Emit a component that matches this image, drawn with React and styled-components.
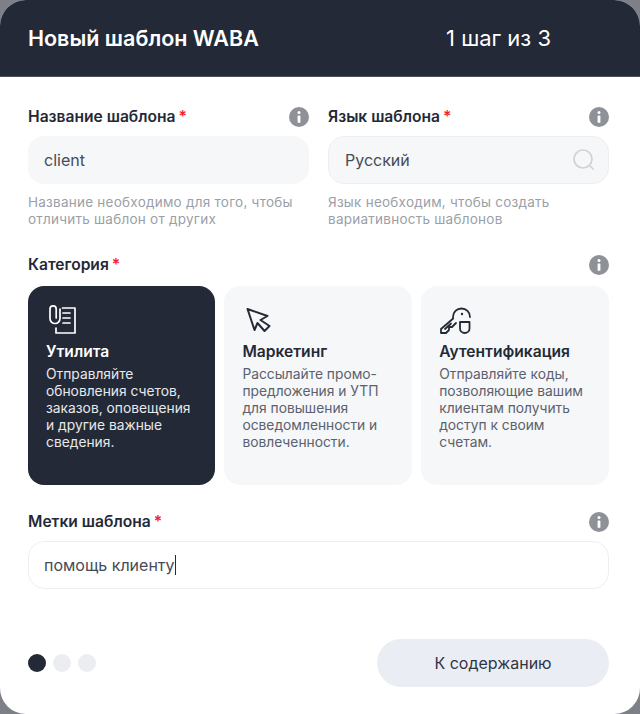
import React from "react";
import styled, { createGlobalStyle } from "styled-components";

const Global = createGlobalStyle`
  html, body { margin: 0; padding: 0; background: #7d8087; }
  * { box-sizing: border-box; }
  body { font-family: Inter, "Noto Sans", sans-serif; }
`;

const Modal = styled.div`
  width: 640px;
  height: 714px;
  background: #fff;
  border-radius: 26px;
  overflow: hidden;
  display: flex;
  flex-direction: column;
`;

const Header = styled.header`
  height: 77px;
  flex: none;
  background: #232936;
  color: #fff;
  display: grid;
  grid-template-columns: 418px 1fr;
  align-items: center;
  padding: 0 28px;
  border-bottom: 1px solid #4a4f5a;
`;

const Title = styled.h1`
  margin: 0;
  font-size: 21.5px;
  line-height: 24px;
  font-weight: 600;
`;

const Step = styled.div`
  font-size: 22px;
  line-height: 24px;
  font-weight: 400;
`;

const Body = styled.main`
  flex: 1;
  display: flex;
  flex-direction: column;
  padding: 29px 31px 27px 28px;
`;

const TwoCols = styled.div`
  display: grid;
  grid-template-columns: 281px 281px;
  column-gap: 19px;
`;

const LabelRow = styled.div`
  display: flex;
  align-items: center;
  justify-content: space-between;
  height: 22px;
`;

const Label = styled.label`
  font-size: 15.6px;
  line-height: 22px;
  font-weight: 600;
  color: #232936;
  i {
    font-style: normal;
    color: #f5222d;
    margin-left: 3px;
  }
`;

const InfoDot = styled.span`
  width: 20px;
  height: 20px;
  border-radius: 50%;
  background: #8e9197;
  display: flex;
  align-items: center;
  justify-content: center;
`;

const Field = styled.div`
  margin-top: 8px;
  height: 48px;
  border-radius: 16px;
  display: flex;
  align-items: center;
  justify-content: space-between;
  padding: 0 14px 0 ${(p) => p.$inset}px;
  font-size: 16px;
  color: #454b57;
  background: ${(p) => (p.$filled ? "#f6f7f9" : "#fff")};
  border: 1px solid ${(p) => (p.$bordered ? "#eceef1" : "transparent")};
`;

const Value = styled.span`
  display: inline-flex;
  align-items: center;
`;

const Caret = styled.span`
  display: inline-block;
  width: 1px;
  height: 20px;
  background: #232936;
`;

const Help = styled.p`
  margin: 10px 0 0;
  font-size: 13.5px;
  line-height: 17px;
  letter-spacing: 0.25px;
  color: #9a9fa8;
`;

const Section = styled.section`
  margin-top: ${(p) => p.$top}px;
`;

const Cards = styled.div`
  margin-top: 10px;
  display: grid;
  grid-template-columns: 187.4px 187.8px 187.8px;
  column-gap: 9px;
`;

const Card = styled.article`
  height: 199px;
  border-radius: 16px;
  padding: 18px 18px 0;
  background: ${(p) => (p.$active ? "#232936" : "#f6f7f9")};
  color: ${(p) => (p.$active ? "#fff" : "#232936")};
`;

const CardIcon = styled.div`
  height: 32px;
  display: flex;
  align-items: center;
  color: inherit;
`;

const CardTitle = styled.h3`
  margin: 6px 0 0;
  font-size: 15.6px;
  line-height: 20px;
  font-weight: 600;
`;

const CardText = styled.p`
  margin: 4px 0 0;
  font-size: 13.8px;
  line-height: 17px;
  color: ${(p) => (p.$active ? "#e6e8ec" : "#5b616d")};
`;

const Footer = styled.footer`
  margin-top: auto;
  display: flex;
  align-items: center;
  justify-content: space-between;
`;

const Dots = styled.div`
  display: flex;
  gap: 7px;
`;

const Dot = styled.span`
  width: 18px;
  height: 18px;
  border-radius: 50%;
  background: ${(p) => (p.$active ? "#232936" : "#ebedf1")};
`;

const NextButton = styled.button`
  width: 232px;
  height: 48px;
  border: none;
  border-radius: 24px;
  background: #ebedf4;
  color: #2f3542;
  font-family: inherit;
  font-size: 16px;
  font-weight: 400;
`;

const Info = () => (
  <InfoDot>
    <svg width="4" height="12" viewBox="0 0 4 12" fill="#fff">
      <circle cx="2" cy="1.6" r="1.5" />
      <rect x="0.6" y="4.4" width="2.8" height="7.4" rx="0.6" />
    </svg>
  </InfoDot>
);

const Search = () => (
  <svg width="24" height="24" viewBox="0 0 24 24" fill="none" stroke="#cfd1d4" strokeWidth="1.7" strokeLinecap="round" style={{ marginRight: -2 }}>
    <circle cx="11" cy="11" r="9" />
    <path d="M18 18l3.2 3" />
  </svg>
);

const ClipDoc = () => (
  <svg width="28" height="32" viewBox="0 0 28 32" fill="none" stroke="currentColor" strokeWidth="1.7" strokeLinecap="round" strokeLinejoin="round" style={{ marginLeft: 2 }}>
    <path d="M12 5v9.500a5 5 0 0 1-10 0V5a3 3 0 0 1 6.200 0v9" />
    <path d="M14.500 4H27v25H8v-5" />
    <path d="M15 9h7M15 14h7M15 19h7" />
  </svg>
);

const Arrow = () => (
  <svg width="30" height="32" viewBox="0 0 30 32" fill="none" stroke="currentColor" strokeWidth="2" strokeLinejoin="round">
    <path d="M5.500 5l20 7-7 4 9 6-5 5-7-8-3 7z" />
  </svg>
);

const KeyShield = () => (
  <svg width="32" height="32" viewBox="0 0 32 32" fill="none" stroke="currentColor" strokeWidth="1.8" strokeLinecap="round" strokeLinejoin="round">
    <path d="M31 13a8.500 8.500 0 1 0-17 0c0 .5 0 1 .200 1.500L2 25v4h5l3-3v-3h3l4-4" />
    <circle cx="23" cy="10" r="1.200" fill="currentColor" stroke="none" />
    <path d="M6 25l6-5.500" />
    <path d="M21 18h9.500v6.500c0 2.500-2 4.500-4.750 4.500S21 27 21 24.500z" />
  </svg>
);

const cards = [
  {
    icon: <ClipDoc />,
    title: "Утилита",
    text: "Отправляйте обновления счетов, заказов, оповещения и другие важные сведения.",
    active: true,
  },
  {
    icon: <Arrow />,
    title: "Маркетинг",
    text: "Рассылайте промо-предложения и УТП для повышения осведомленности и вовлеченности.",
  },
  {
    icon: <KeyShield />,
    title: "Аутентификация",
    text: "Отправляйте коды, позволяющие вашим клиентам получить доступ к своим счетам.",
  },
];

export default function App() {
  return (
    <>
      <Global />
      <Modal>
        <Header>
          <Title>Новый шаблон WABA</Title>
          <Step>1 шаг из 3</Step>
        </Header>
        <Body>
          <TwoCols>
            <div>
              <LabelRow>
                <Label>Название шаблона<i>*</i></Label>
                <Info />
              </LabelRow>
              <Field $filled $inset={15}>client</Field>
              <Help>Название необходимо для того, чтобы отличить шаблон от других</Help>
            </div>
            <div>
              <LabelRow>
                <Label>Язык шаблона<i>*</i></Label>
                <Info />
              </LabelRow>
              <Field $filled $bordered $inset={16}>
                Русский
                <Search />
              </Field>
              <Help>Язык необходим, чтобы создать вариативность шаблонов</Help>
            </div>
          </TwoCols>
          <Section $top={26}>
            <LabelRow>
              <Label>Категория<i>*</i></Label>
              <Info />
            </LabelRow>
            <Cards>
              {cards.map((c) => (
                <Card key={c.title} $active={c.active}>
                  <CardIcon>{c.icon}</CardIcon>
                  <CardTitle>{c.title}</CardTitle>
                  <CardText $active={c.active}>{c.text}</CardText>
                </Card>
              ))}
            </Cards>
          </Section>
          <Section $top={26}>
            <LabelRow>
              <Label>Метки шаблона<i>*</i></Label>
              <Info />
            </LabelRow>
            <Field $bordered $inset={15}>
              <Value>
                помощь клиенту
                <Caret />
              </Value>
            </Field>
          </Section>
          <Footer>
            <Dots>
              <Dot $active />
              <Dot />
              <Dot />
            </Dots>
            <NextButton>К содержанию</NextButton>
          </Footer>
        </Body>
      </Modal>
    </>
  );
}
